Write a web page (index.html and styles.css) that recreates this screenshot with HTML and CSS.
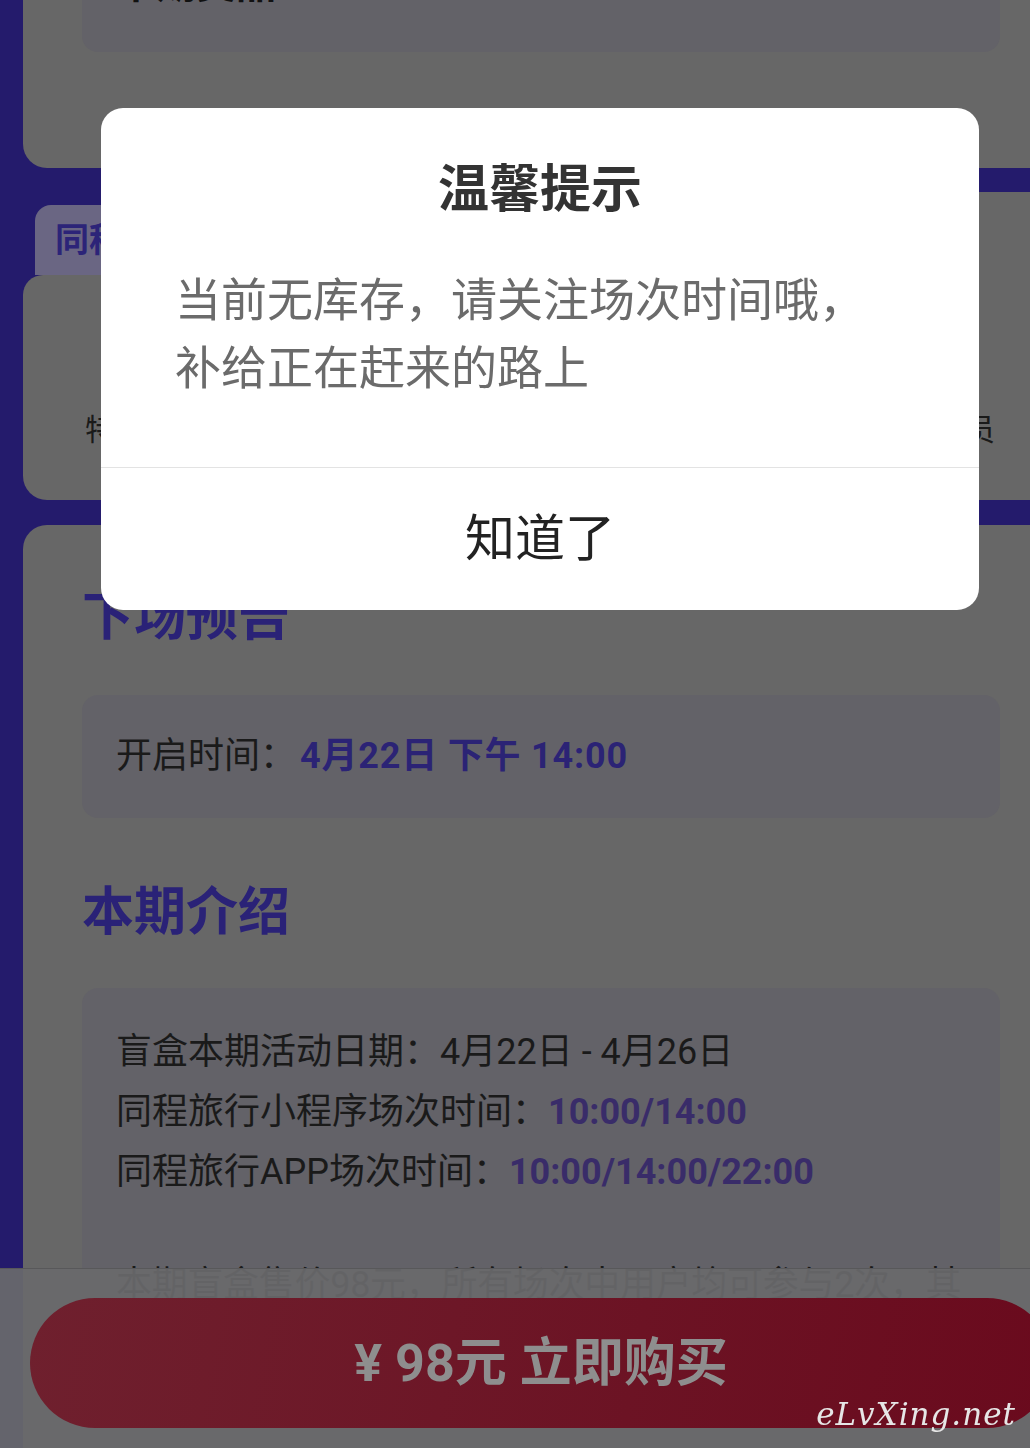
FILE: index.html
```html
<!DOCTYPE html>
<html lang="zh-CN">
<head>
    <meta charset="UTF-8">
    <meta name="viewport" content="width=device-width, initial-scale=1.0">
    <title>盲盒活动</title>
    <link rel="stylesheet" href="styles.css">
</head>
<body>
    <div class="page">
        <!-- Prize card (scrolled mostly out of view) -->
        <div class="card card-top">
            <div class="box box-prize">
                <span class="prize-text">本期奖品</span>
            </div>
        </div>

        <!-- Channel tabs -->
        <div class="card-tabs">
            <div class="tabs">
                <div class="tab">同程旅行小程序</div>
                <div class="tab tab-active">同程旅行APP</div>
            </div>
            <div class="tab-body">
                <div class="labels">
                    <span>特价酒店</span>
                    <span>超级会员</span>
                </div>
            </div>
        </div>

        <!-- Next round + intro -->
        <div class="card card-info">
            <h2 class="heading">下场预告</h2>
            <div class="box box-next">
                开启时间：<span class="hl hl-wide">4月22日 下午 14:00</span>
            </div>

            <h2 class="heading heading-intro">本期介绍</h2>
            <div class="box box-intro">
                <p>盲盒本期活动日期：4月22日 - 4月26日</p>
                <p>同程旅行小程序场次时间：<span class="hl hl-soft">10:00/14:00</span></p>
                <p>同程旅行APP场次时间：<span class="hl hl-soft">10:00/14:00/22:00</span></p>
                <p class="gap">本期盲盒售价98元，所有场次中用户均可参与2次，其余规则以页面为准</p>
            </div>
        </div>
    </div>

    <!-- Buy bar -->
    <div class="buy-bar">
        <button class="buy-button">¥ 98元 立即购买</button>
        <span class="watermark">eLvXing.net</span>
    </div>

    <!-- Stock notice dialog -->
    <div class="dialog">
        <div class="dialog-title">温馨提示</div>
        <div class="dialog-text">当前无库存，请关注场次时间哦，补给正在赶来的路上</div>
        <div class="dialog-button">知道了</div>
    </div>
</body>
</html>
```

FILE: styles.css
```css
/* Colours are as seen under the dialog mask */
body {
    margin: 0;
    height: 1448px;
    overflow: hidden;
    background-color: #241b6c;
    font-family: Roboto, 'Noto Sans CJK SC', sans-serif;
    color: #1a1a1a;
}
.page {
    padding-left: 23px;
}
.card {
    width: 1037px;
    box-sizing: border-box;
    background-color: #676767;
    border-radius: 24px;
    padding: 0 60px 0 59px;
}
.box {
    background-color: #636268;
    border-radius: 16px;
    padding: 0 34px;
}

/* Prize card */
.card-top {
    margin-top: -110px;
    padding-top: 40px;
    padding-bottom: 116px;
}
.box-prize {
    padding-top: 30px;
    padding-bottom: 42px;
}
.prize-text {
    display: block;
    font-size: 40px;
    line-height: 50px;
    font-weight: bold;
    color: #111;
}

/* Tabs card */
.card-tabs {
    width: 1037px;
    margin-top: 24px;
}
.tabs {
    display: flex;
    align-items: flex-end;
    height: 83px;
}
.tab {
    width: 450px;
    height: 70px;
    margin-left: 12px;
    box-sizing: border-box;
    padding-left: 20px;
    background-color: #6a6683;
    border-radius: 16px 16px 0 0;
    font-size: 34px;
    line-height: 70px;
    font-weight: bold;
    color: #2c2478;
}
.tab-active {
    flex: 1;
    height: 83px;
    margin-left: 0;
    background-color: #676767;
    border-radius: 24px 24px 0 0;
    line-height: 83px;
    text-align: center;
}
.tab-body {
    height: 225px;
    background-color: #676767;
    border-radius: 20px 0 24px 24px;
    box-sizing: border-box;
    padding: 135px 65px 0 62px;
}
.labels {
    display: flex;
    justify-content: space-between;
    font-size: 30px;
    line-height: 40px;
    color: #1a1a1a;
}

/* Info card */
.card-info {
    margin-top: 25px;
    padding-top: 63px;
    padding-bottom: 200px;
    border-radius: 24px 24px 0 0;
}
.heading {
    margin: 0;
    font-size: 52px;
    line-height: 60px;
    font-weight: bold;
    color: #2a2277;
}
.heading-intro {
    margin-top: 65px;
}
.box-next {
    margin-top: 47px;
    height: 123px;
    line-height: 123px;
    font-size: 36px;
}
.box-intro {
    margin-top: 45px;
    padding-top: 34px;
    padding-bottom: 60px;
    font-size: 36px;
    line-height: 60px;
}
.box-intro p {
    margin: 0;
}
.box-intro .gap {
    margin-top: 53px;
    letter-spacing: -0.3px;
}
.hl {
    font-weight: bold;
    color: #2b2375;
}
.hl-wide {
    margin-left: 4px;
    letter-spacing: 0.8px;
}
.hl-soft {
    color: #392c69;
}

/* Bottom buy bar */
.buy-bar {
    position: fixed;
    left: 0;
    right: 0;
    bottom: 0;
    height: 180px;
    box-sizing: border-box;
    padding: 30px 0 0 30px;
    background-color: rgba(105, 105, 108, 0.93);
    border-top: 1px solid #58585a;
    overflow: hidden;
}
.buy-button {
    display: block;
    width: 1022px;
    height: 130px;
    margin-top: -1px;
    padding: 0 0 10px;
    border: none;
    border-radius: 65px;
    background: linear-gradient(100deg, #6f202e, #6a0a1d);
    font-family: Roboto, 'Noto Sans CJK SC', sans-serif;
    font-size: 52px;
    font-weight: bold;
    color: #8e8e8e;
}
.watermark {
    position: absolute;
    right: 14px;
    bottom: 16px;
    font-family: 'DejaVu Serif', serif;
    font-style: italic;
    font-size: 31px;
    color: #e6e6e6;
    letter-spacing: 1px;
}

/* Dialog */
.dialog {
    position: fixed;
    left: 101px;
    top: 108px;
    width: 878px;
    background-color: #fff;
    border-radius: 22px;
    overflow: hidden;
}
.dialog-title {
    padding-top: 47px;
    font-size: 51px;
    line-height: 70px;
    font-weight: bold;
    color: #333;
    text-align: center;
}
.dialog-text {
    margin-top: 41px;
    padding: 0 90px 65px 74px;
    font-size: 46px;
    line-height: 68px;
    color: #6b6b6b;
    border-bottom: 1px solid #e3e3e3;
}
.dialog-button {
    height: 142px;
    line-height: 142px;
    font-size: 50px;
    color: #222;
    text-align: center;
}
```
